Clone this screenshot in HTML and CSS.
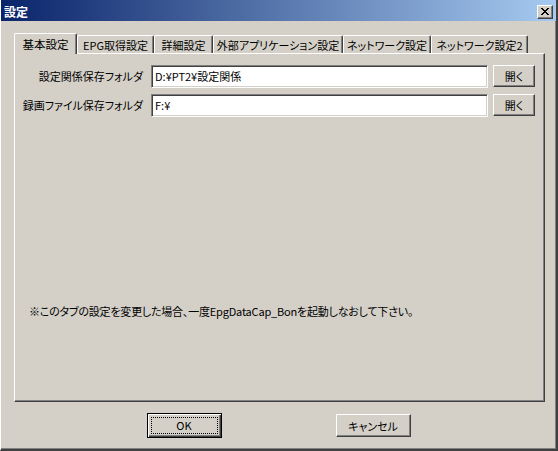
FILE: index.html
```html
<!DOCTYPE html>
<html lang="ja">
<head>
<meta charset="utf-8">
<title>設定</title>
<link rel="stylesheet" href="styles.css">
</head>
<body>
<div class="window">
  <div class="titlebar">
    <span class="title">設定</span>
    <span class="close"><svg width="8" height="7" viewBox="0 0 8 7"><path d="M0 0h2v1h1v1h2v-1h1v-1h2v1h-1v1h-1v1h-1v1h1v1h1v1h1v1h-2v-1h-1v-1h-2v1h-1v1h-2v-1h1v-1h1v-1h1v-1h-1v-1h-1v-1h-1z" fill="#000"/></svg></span>
  </div>
  <div class="client">
    <div class="tabs">
      <div class="tab active w1">基本設定</div>
      <div class="tab w2">EPG取得設定</div>
      <div class="tab w3">詳細設定</div>
      <div class="tab w4">外部アプリケーション設定</div>
      <div class="tab w5">ネットワーク設定</div>
      <div class="tab w6">ネットワーク設定2</div>
    </div>
    <div class="panel">
      <div class="rows">
        <div class="row">
          <span class="label">設定関係保存フォルダ</span>
          <div class="input">D:¥PT2¥設定関係</div>
          <button class="btn small">開く</button>
        </div>
        <div class="row">
          <span class="label">録画ファイル保存フォルダ</span>
          <div class="input">F:¥</div>
          <button class="btn small">開く</button>
        </div>
      </div>
      <p class="note">※このタブの設定を変更した場合、一度EpgDataCap_Bonを起動しなおして下さい。</p>
    </div>
    <div class="actions">
      <button class="btn default"><span class="focus">OK</span></button>
      <button class="btn">キャンセル</button>
    </div>
  </div>
</div>
</body>
</html>
```
FILE: styles.css
```css
* { box-sizing: border-box; }
html, body { margin: 0; padding: 0; }
body {
  width: 558px;
  height: 451px;
  overflow: hidden;
  background: #d4d0c8;
  font-family: "Noto Sans CJK JP", "MS UI Gothic", sans-serif;
  font-size: 11px;
  font-feature-settings: "palt";
  color: #000;
}
.window {
  width: 558px;
  height: 451px;
  display: flex;
  flex-direction: column;
  border-left: 1px solid #fff;
  border-right: 2px solid #404040;
  border-bottom: 2px solid #404040;
  box-shadow: inset -1px -1px 0 #808080;
}
.titlebar {
  height: 21px;
  padding: 3px 3px 0 3px;
  display: flex;
  align-items: center;
  justify-content: space-between;
  background: linear-gradient(to right, #0a246a, #a6caf0);
}
.title {
  color: #fff;
  font-weight: bold;
  font-size: 12px;
  line-height: 14px;
}
.close {
  width: 16px;
  height: 14px;
  display: flex;
  align-items: center;
  justify-content: center;
  background: #d4d0c8;
  border-top: 1px solid #fff;
  border-left: 1px solid #fff;
  border-right: 1px solid #404040;
  border-bottom: 1px solid #404040;
  box-shadow: inset -1px -1px 0 #808080;
  padding: 0 1px 1px 0;
}
.close svg { display: block; }
.client {
  flex: 1;
  padding: 12px 0 0 13px;
  display: flex;
  flex-direction: column;
}
.tabs {
  display: flex;
  align-items: flex-end;
  height: 20px;
}
.tab {
  height: 18px;
  line-height: 16px;
  text-align: center;
  white-space: nowrap;
  overflow: hidden;
  border-top: 1px solid #fff;
  border-left: 1px solid #fff;
  border-right: 1px solid #404040;
  box-shadow: inset -1px 0 0 #808080;
  border-radius: 2px 2px 0 0;
  background: #d4d0c8;
  padding-top: 1px;
}
.tab.active {
  height: 21px;
  margin-bottom: -1px;
  position: relative;
  z-index: 1;
  line-height: 18px;
  font-size: 11.5px;
}
.w1 { width: 63px; }
.w2 { width: 77px; }
.w3 { width: 59px; }
.w4 { width: 130px; }
.w5 { width: 88px; }
.w6 { width: 97px; }
.panel {
  width: 531px;
  height: 349px;
  border-top: 1px solid #fff;
  border-left: 1px solid #fff;
  border-right: 1px solid #404040;
  border-bottom: 1px solid #404040;
  box-shadow: inset -1px -1px 0 #808080;
  padding-top: 11px;
  display: flex;
  flex-direction: column;
}
.rows {
  display: flex;
  flex-direction: column;
  gap: 6px;
}
.row {
  display: grid;
  grid-template-columns: 128px 337px 42px;
  column-gap: 8px;
  align-items: start;
}
.row .btn.small { margin-left: -3px; }
.label {
  text-align: right;
  white-space: nowrap;
  line-height: 23px;
}
.input {
  height: 23px;
  background: #fff;
  border-top: 1px solid #808080;
  border-left: 1px solid #808080;
  border-bottom: 1px solid #fff;
  border-right: 1px solid #fff;
  box-shadow: inset 1px 1px 0 #404040, inset -1px -1px 0 #d4d0c8;
  padding-left: 3px;
  line-height: 20px;
  white-space: nowrap;
}
.btn {
  font: inherit;
  color: #000;
  background: #d4d0c8;
  border-top: 1px solid #fff;
  border-left: 1px solid #fff;
  border-right: 1px solid #404040;
  border-bottom: 1px solid #404040;
  box-shadow: inset -1px -1px 0 #808080;
  border-radius: 0;
  padding: 0;
  margin: 0;
  width: 75px;
  height: 23px;
  line-height: 20px;
  text-align: center;
}
.btn.small {
  width: 42px;
  height: 22px;
}
.note {
  margin: 186px 0 0 14px;
  line-height: 16px;
  white-space: nowrap;
  letter-spacing: -0.2px;
}
.actions {
  display: flex;
  justify-content: center;
  gap: 114px;
  margin-top: 12px;
  padding-right: 13px;
  align-items: flex-start;
}
.btn.default {
  height: 25px;
  margin-top: -1px;
  border: 1px solid #000;
  box-shadow: inset 1px 1px 0 #fff, inset -1px -1px 0 #404040, inset -2px -2px 0 #808080;
  padding: 3px;
}
.focus {
  display: block;
  height: 100%;
  border: 1px dotted #000;
  line-height: 15px;
}
```
